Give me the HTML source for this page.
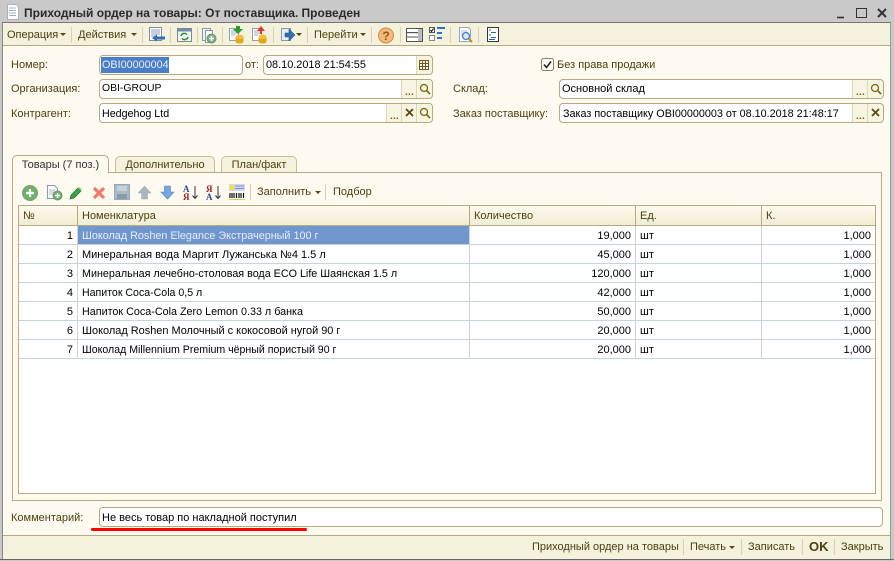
<!DOCTYPE html>
<html><head><meta charset="utf-8">
<style>
html,body{margin:0;padding:0}
body{width:894px;height:561px;overflow:hidden;position:relative;background:#c9c9c9;font:11px/14px "Liberation Sans",sans-serif;color:#000}
.a,.t,.f,svg{position:absolute}
.t{white-space:nowrap;line-height:14px}
.l{color:#4a3f10}
.f{box-sizing:border-box;background:#fff;border:1px solid #b5aa82;border-radius:4px;height:20px}
.btn{position:absolute;top:0;bottom:0;width:15px;background:#f7f4e2;border-left:1px solid #ddd7b8}
.sep{position:absolute;width:1px;background:#d8d2b0}
.c{position:absolute;white-space:nowrap;line-height:14px;color:#000}
.h{position:absolute;top:206px;height:19px;background:linear-gradient(#fdfbef,#f1ecd3);border-right:1px solid #b5aa82;box-sizing:border-box;color:#4a3f10;padding:3px 0 0 4px;line-height:14px;white-space:nowrap}
.tab{position:absolute;box-sizing:border-box;border:1px solid #c8bf97;border-bottom:0;border-radius:5px 5px 0 0;background:#f4f1dc;color:#4a3f10;text-align:center;line-height:17px}
.dots{position:absolute;left:3px;top:10px;font-size:10px;line-height:6px;color:#7a6510;font-weight:bold;letter-spacing:.2px}
</style></head><body>
<!-- window -->
<div class="a" style="left:0;top:0;width:894px;height:561px;background:#c9c9c9"></div>
<svg style="left:6px;top:4px" width="14" height="16"><path d="M1.500.5h9l2 2v13h-11z" fill="#fff" stroke="#a9b3c0"/><path d="M3 4h7M3 6.500h7M3 9h7M3 11.500h7" stroke="#a8b0bb"/></svg>
<div class="t" style="left:24px;top:6px;font-weight:bold;color:#2a2a2a;font-size:12px">Приходный ордер на товары: От поставщика. Проведен</div>
<svg style="left:834px;top:4px" width="56" height="16"><path d="M3 13.500h7" stroke="#333" stroke-width="1.600"/><rect x="22.500" y="4.500" width="10" height="9" fill="none" stroke="#333"/><path d="M44 5l8 8M52 5l-8 8" stroke="#333" stroke-width="2"/></svg>

<div class="a" style="left:2px;top:22px;width:889px;height:537px;background:#fefaef;border-top:1px solid #777;border-left:1px solid #888;box-sizing:border-box;border-right:1px solid #999"></div>
<div class="a" style="left:3px;top:23px;width:887px;height:23px;background:#f4f1dc;border-bottom:1px solid #b5aa82;box-sizing:border-box"></div>
<div class="a" style="left:3px;top:535px;width:887px;height:24px;background:#f4f1dc;border-top:1px solid #b5aa82;box-sizing:border-box"></div>
<div class="a" style="left:0;top:559px;width:894px;height:1px;background:#666"></div>

<!-- toolbar -->
<div class="t l" style="left:7px;top:28px">Операция</div>
<svg style="left:60px;top:33px" width="7" height="4"><path d="M0 0h6L3 3z" fill="#5a4a10"/></svg>
<div class="sep" style="left:71px;top:27px;height:16px"></div>
<div class="t l" style="left:78px;top:28px">Действия</div>
<svg style="left:131px;top:33px" width="7" height="4"><path d="M0 0h6L3 3z" fill="#5a4a10"/></svg>
<div class="sep" style="left:142px;top:27px;height:16px"></div>
<svg style="left:148px;top:26px" width="20" height="18"><path d="M1.500 1.500h12v13h-12z" fill="#fff" stroke="#7c8ea3"/><path d="M3 4h9M3 6h9M3 8h9M3 10h6" stroke="#8fa0b4"/><path d="M4 12l5-3.500v2h8v3H9v2z" fill="#2f6fb5"/></svg>
<div class="sep" style="left:170px;top:27px;height:16px"></div>
<svg style="left:177px;top:28px" width="16" height="15"><rect x=".5" y=".5" width="14" height="13" fill="#f2f5ee" stroke="#7c8a94"/><rect x="1" y="1" width="13" height="2.500" fill="#6f8fb0"/><path d="M4 8a3.500 3.500 0 0 1 6-1.500M11 9a3.500 3.500 0 0 1-6 1.500" stroke="#2e8b3a" stroke-width="1.500" fill="none"/></svg>
<div class="sep" style="left:197px;top:27px;height:16px"></div>
<svg style="left:201px;top:27px" width="16" height="18"><path d="M1.500 1.500h8v12h-8z" fill="#eef1f4" stroke="#8b97a5"/><path d="M4.500 3.500h7v12h-7z" fill="#fff" stroke="#8b97a5"/><circle cx="10.500" cy="11.500" r="4.500" fill="#7cae8c" stroke="#6b8f78"/><path d="M10.500 9v5M8 11.500h5" stroke="#fff" stroke-width="1.500"/></svg>
<div class="sep" style="left:222px;top:27px;height:16px"></div>
<svg style="left:228px;top:26px" width="17" height="18"><path d="M1.500 2.500h9v12h-9z" fill="#fff" stroke="#93a0ad"/><path d="M3 5h6M3 7h6M3 9h4" stroke="#a4aeb9"/><path d="M8 0h4v3h3l-5 5-5-5h3z" fill="#2c9a2c"/><ellipse cx="11.500" cy="10.500" rx="4" ry="1.800" fill="#f0c030"/><path d="M7.500 10.500v5c0 1 1.500 2 4 2s4-1 4-2v-5c0 1-1.500 2-4 2s-4-1-4-2z" fill="#e2a818"/></svg>
<svg style="left:251px;top:26px" width="17" height="18"><path d="M1.500 2.500h9v12h-9z" fill="#fff" stroke="#93a0ad"/><path d="M3 5h6M3 7h6M3 9h4" stroke="#a4aeb9"/><path d="M9 8V5H6l4-5 4 5h-3v3z" fill="#d9382c"/><ellipse cx="11.500" cy="10.500" rx="4" ry="1.800" fill="#f0c030"/><path d="M7.500 10.500v5c0 1 1.500 2 4 2s4-1 4-2v-5c0 1-1.500 2-4 2s-4-1-4-2z" fill="#e2a818"/></svg>
<div class="sep" style="left:273px;top:27px;height:16px"></div>
<svg style="left:280px;top:27px" width="22" height="16"><path d="M1.500 1.500h9v12h-9z" fill="#e8edf2" stroke="#8b97a5"/><path d="M5 6h4V2l6 6-6 6v-4H5z" fill="#2f6fb5" stroke="#21466e" stroke-width=".5"/><path d="M16 6h6l-3 3z" fill="#5a4a10"/></svg>
<div class="sep" style="left:307px;top:27px;height:16px"></div>
<div class="t l" style="left:314px;top:28px">Перейти</div>
<svg style="left:360px;top:33px" width="7" height="4"><path d="M0 0h6L3 3z" fill="#5a4a10"/></svg>
<div class="sep" style="left:371px;top:27px;height:16px"></div>
<svg style="left:377px;top:27px" width="18" height="18"><circle cx="9" cy="8.500" r="7.500" fill="#f5b877" stroke="#c98a48"/><text x="9" y="13" font-size="12" font-weight="bold" font-family="Liberation Sans,sans-serif" text-anchor="middle" fill="#8a5a20">?</text></svg>
<div class="sep" style="left:400px;top:27px;height:16px"></div>
<svg style="left:406px;top:28px" width="17" height="15"><rect x=".5" y=".5" width="16" height="13" fill="#fff" stroke="#555"/><path d="M1 4.500h15M1 9h15" stroke="#555"/><rect x="12" y="1" width="4" height="12" fill="#bbb"/><rect x="1" y="5" width="11" height="1" fill="#ddd"/></svg>
<svg style="left:429px;top:27px" width="17" height="15"><rect x=".5" y=".5" width="5" height="5" fill="#fff" stroke="#555"/><path d="M1.500 3l1 1.500 2-3" stroke="#000" fill="none"/><rect x=".5" y="8.500" width="5" height="5" fill="#fff" stroke="#888"/><path d="M8 1h8M8 6h5M8 11h5" stroke="#2f6fd0" stroke-width="2"/></svg>
<div class="sep" style="left:450px;top:27px;height:16px"></div>
<svg style="left:458px;top:26px" width="16" height="18"><path d="M1.500 1.500h9l2 2v12h-11z" fill="#fff" stroke="#8fa7c8"/><path d="M3 5h6M3 7h3M3 9h3" stroke="#a8c0da"/><circle cx="8" cy="10" r="3.500" fill="#cfe7f7" stroke="#4a80b8" stroke-width="1.300"/><path d="M10.500 12.500l3.500 3.500" stroke="#c08a30" stroke-width="2"/></svg>
<div class="sep" style="left:478px;top:27px;height:16px"></div>
<svg style="left:487px;top:27px" width="13" height="16"><rect x=".5" y=".5" width="11" height="14" fill="#fff" stroke="#333"/><path d="M2 3h2M4 5.500h5M2 8h2M4 10.500h5M2 12.500h6" stroke="#2a6a9a"/></svg>

<!-- form labels -->
<div class="t l" style="left:11px;top:58px">Номер:</div>
<div class="t l" style="left:11px;top:82px">Организация:</div>
<div class="t l" style="left:11px;top:107px">Контрагент:</div>
<div class="t l" style="left:245px;top:58px">от:</div>
<div class="t l" style="left:453px;top:82px">Склад:</div>
<div class="t l" style="left:453px;top:107px">Заказ поставщику:</div>

<!-- fields -->
<div class="f" style="left:99px;top:55px;width:144px"><div class="a" style="left:1px;top:1px;width:68px;height:16px;background:#4a7fc8"></div><div class="t" style="left:2px;top:2px;color:#e8eefc;font-size:10.800px">OBI00000004</div></div>
<div class="f" style="left:263px;top:55px;width:170px"><div class="t" style="left:2px;top:2px;font-size:10.900px">08.10.2018 21:54:55</div><div class="btn" style="right:0;border-radius:0 4px 4px 0"><svg style="left:2px;top:3px" width="11" height="12"><path d="M.5 1.500h9v9h-9zM.5 4.500h9M.5 7.500h9M3.500 1.500v9M6.500 1.500v9" fill="none" stroke="#6a5a20"/></svg></div></div>

<div class="f" style="left:99px;top:79px;width:334px"><div class="t" style="left:2px;top:2px;font-size:10.400px">OBI-GROUP</div>
 <div class="btn" style="right:15px"><span class="dots">...</span></div>
 <div class="btn" style="right:0;border-radius:0 4px 4px 0"><svg style="left:2px;top:3px" width="12" height="12"><circle cx="5" cy="5" r="3.500" fill="none" stroke="#7a6510" stroke-width="1.300"/><path d="M7.500 7.500l3.500 3.500" stroke="#7a6510" stroke-width="1.600"/></svg></div></div>

<div class="f" style="left:99px;top:103px;width:334px"><div class="t" style="left:2px;top:3px;font-size:10.700px">Hedgehog Ltd</div>
 <div class="btn" style="right:30px"><span class="dots">...</span></div>
 <div class="btn" style="right:15px"><svg style="left:3px;top:4px" width="10" height="10"><path d="M1 1l7 7M8 1L1 8" stroke="#5a4a10" stroke-width="1.800"/></svg></div>
 <div class="btn" style="right:0;border-radius:0 4px 4px 0"><svg style="left:2px;top:3px" width="12" height="12"><circle cx="5" cy="5" r="3.500" fill="none" stroke="#7a6510" stroke-width="1.300"/><path d="M7.500 7.500l3.500 3.500" stroke="#7a6510" stroke-width="1.600"/></svg></div></div>

<div class="f" style="left:559px;top:79px;width:325px"><div class="t" style="left:2px;top:2px;font-size:11px">Основной склад</div>
 <div class="btn" style="right:15px"><span class="dots">...</span></div>
 <div class="btn" style="right:0;border-radius:0 4px 4px 0"><svg style="left:2px;top:3px" width="12" height="12"><circle cx="5" cy="5" r="3.500" fill="none" stroke="#7a6510" stroke-width="1.300"/><path d="M7.500 7.500l3.500 3.500" stroke="#7a6510" stroke-width="1.600"/></svg></div></div>

<div class="f" style="left:559px;top:103px;width:325px"><div class="t" style="left:3px;top:3px;font-size:10.800px">Заказ поставщику OBI00000003 от 08.10.2018 21:48:17</div>
 <div class="btn" style="right:15px"><span class="dots">...</span></div>
 <div class="btn" style="right:0;border-radius:0 4px 4px 0"><svg style="left:3px;top:4px" width="10" height="10"><path d="M1 1l7 7M8 1L1 8" stroke="#5a4a10" stroke-width="1.800"/></svg></div></div>

<!-- checkbox -->
<svg style="left:541px;top:58px" width="13" height="13"><rect x=".5" y=".5" width="12" height="12" rx="2" fill="#fdfdf8" stroke="#8a8060"/><path d="M3 6.500l2.500 3L10 3.500" fill="none" stroke="#222" stroke-width="1.600"/></svg>
<div class="t l" style="left:557px;top:58px">Без права продажи</div>

<!-- tabs -->
<div class="a" style="left:12px;top:172px;width:870px;height:329px;border:1px solid #b5aa82;box-sizing:border-box"></div>
<div class="tab" style="left:115px;top:156px;width:100px;height:16px">Дополнительно</div>
<div class="tab" style="left:221px;top:156px;width:76px;height:16px">План/факт</div>
<div class="tab" style="left:12px;top:155px;width:97px;height:18px;background:#fefaef;color:#333;line-height:19px;z-index:2;border-color:#b5aa82">Товары (7 поз.)</div>

<!-- table toolbar -->
<svg style="left:22px;top:185px" width="16" height="16"><circle cx="8" cy="8" r="7.500" fill="#6fb06a" stroke="#7d9a7a"/><path d="M8 4v8M4 8h8" stroke="#fff" stroke-width="2.200"/></svg>
<svg style="left:46px;top:184px" width="17" height="17"><path d="M1.500 1.500h7l3 3v10h-10z" fill="#fff" stroke="#8b9bb0"/><path d="M3 6h6M3 8h6M3 10h4" stroke="#a8b8cb"/><circle cx="11.500" cy="11.500" r="4.500" fill="#6fb06a" stroke="#6b8f78"/><path d="M11.500 9v5M9 11.500h5" stroke="#fff" stroke-width="1.500"/></svg>
<svg style="left:69px;top:186px" width="14" height="14"><path d="M1 13l1-4 7-7 3 3-7 7z" fill="#3fa03f" stroke="#23702a" stroke-width=".7"/><path d="M9 2l3 3 1-1.500-2.500-2.500z" fill="#9bd06a"/></svg>
<svg style="left:92px;top:186px" width="14" height="14"><path d="M2 2l10 10M12 2L2 12" stroke="#ef7a68" stroke-width="3.200"/></svg>
<svg style="left:114px;top:184px" width="16" height="16"><rect x=".5" y=".5" width="15" height="15" fill="#a9bac8" stroke="#98aab8"/><rect x="3" y="2" width="10" height="5" fill="#c6d2dc"/><rect x="3" y="10" width="10" height="5" fill="#8a9cab"/></svg>
<svg style="left:137px;top:185px" width="15" height="15"><path d="M7.500 1L14 8h-3.500v6h-6V8H1z" fill="#a8b6c2" stroke="#9aa8b5" stroke-width=".5"/></svg>
<svg style="left:160px;top:185px" width="15" height="15"><path d="M4.500 1h6v6H14L7.500 14 1 7h3.500z" fill="#74a8e0" stroke="#4f80b8" stroke-width=".6"/></svg>
<svg style="left:183px;top:184px" width="16" height="17"><text x="0" y="8" font-size="9" font-weight="bold" font-family="Liberation Serif,serif" fill="#1f4f96">А</text><text x="0" y="16" font-size="9" font-weight="bold" font-family="Liberation Serif,serif" fill="#a02020">Я</text><path d="M12 2v12M9.500 11.500l2.500 3 2.500-3" fill="none" stroke="#334"/></svg>
<svg style="left:206px;top:184px" width="16" height="17"><text x="0" y="8" font-size="9" font-weight="bold" font-family="Liberation Serif,serif" fill="#a02020">Я</text><text x="0" y="16" font-size="9" font-weight="bold" font-family="Liberation Serif,serif" fill="#1f4f96">А</text><path d="M12 2v12M9.500 11.500l2.500 3 2.500-3" fill="none" stroke="#334"/></svg>
<svg style="left:229px;top:184px" width="16" height="16"><rect x="0" y="0" width="16" height="7" fill="#d0d8f0"/><rect x="1" y="1" width="4" height="5" fill="#f2e040"/><path d="M6 2h9M6 4.500h9" stroke="#8090c8"/><rect x="0" y="8" width="16" height="7" fill="#fff"/><path d="M1 9v5M3 9v5M5 9v5M7.500 9v5M10 9v5M12 9v5M14.500 9v5" stroke="#111" stroke-width="1.200"/><rect y="15" width="16" height="1" fill="#c8d860"/></svg>
<div class="sep" style="left:250px;top:184px;height:16px"></div>
<div class="t l" style="left:257px;top:185px">Заполнить</div>
<svg style="left:315px;top:191px" width="7" height="4"><path d="M0 0h6L3 3z" fill="#5a4a10"/></svg>
<div class="sep" style="left:325px;top:184px;height:16px"></div>
<div class="t l" style="left:333px;top:185px">Подбор</div>

<!-- table -->
<div class="a" style="left:18px;top:205px;width:858px;height:289px;background:#fff;border:1px solid #b5aa82;box-sizing:border-box"></div>
<div class="h" style="left:19px;width:59px;">№</div>
<div class="h" style="left:78px;width:392px">Номенклатура</div>
<div class="h" style="left:470px;width:166px">Количество</div>
<div class="h" style="left:636px;width:126px">Ед.</div>
<div class="h" style="left:762px;width:113px;border-right:0">К.</div>
<div class="a" style="left:19px;top:225px;width:856px;height:1px;background:#b5aa82"></div>

<div class="a" style="left:78px;top:226px;width:391px;height:18px;background:#7097cd"></div>
<!-- grid -->
<div class="a" style="left:19px;top:244px;width:856px;height:1px;background:#c9d3de"></div>
<div class="a" style="left:19px;top:263px;width:856px;height:1px;background:#c9d3de"></div>
<div class="a" style="left:19px;top:282px;width:856px;height:1px;background:#c9d3de"></div>
<div class="a" style="left:19px;top:301px;width:856px;height:1px;background:#c9d3de"></div>
<div class="a" style="left:19px;top:320px;width:856px;height:1px;background:#c9d3de"></div>
<div class="a" style="left:19px;top:339px;width:856px;height:1px;background:#c9d3de"></div>
<div class="a" style="left:19px;top:358px;width:856px;height:1px;background:#c9d3de"></div>
<div class="a" style="left:77px;top:226px;width:1px;height:133px;background:#c9d3de"></div>
<div class="a" style="left:469px;top:226px;width:1px;height:133px;background:#c9d3de"></div>
<div class="a" style="left:635px;top:226px;width:1px;height:133px;background:#c9d3de"></div>
<div class="a" style="left:761px;top:226px;width:1px;height:133px;background:#c9d3de"></div>

<div class="c" style="right:821px;top:229px">1</div><div class="c" style="left:82px;top:229px;color:#e6eefa;font-size:10.800px">Шоколад Roshen Elegance Экстрачерный 100 г</div><div class="c" style="right:263px;top:229px">19,000</div><div class="c" style="left:640px;top:229px">шт</div><div class="c" style="right:23px;top:229px">1,000</div>
<div class="c" style="right:821px;top:248px">2</div><div class="c" style="left:82px;top:248px;font-size:11px">Минеральная вода Маргит Лужанська №4 1.5 л</div><div class="c" style="right:263px;top:248px">45,000</div><div class="c" style="left:640px;top:248px">шт</div><div class="c" style="right:23px;top:248px">1,000</div>
<div class="c" style="right:821px;top:267px">3</div><div class="c" style="left:82px;top:267px;font-size:10.750px">Минеральная лечебно-столовая вода ECO Life Шаянская 1.5 л</div><div class="c" style="right:263px;top:267px">120,000</div><div class="c" style="left:640px;top:267px">шт</div><div class="c" style="right:23px;top:267px">1,000</div>
<div class="c" style="right:821px;top:286px">4</div><div class="c" style="left:82px;top:286px;font-size:10.600px">Напиток Coca-Cola 0,5 л</div><div class="c" style="right:263px;top:286px">42,000</div><div class="c" style="left:640px;top:286px">шт</div><div class="c" style="right:23px;top:286px">1,000</div>
<div class="c" style="right:821px;top:305px">5</div><div class="c" style="left:82px;top:305px;font-size:10.770px">Напиток Coca-Cola Zero Lemon 0.33 л банка</div><div class="c" style="right:263px;top:305px">50,000</div><div class="c" style="left:640px;top:305px">шт</div><div class="c" style="right:23px;top:305px">1,000</div>
<div class="c" style="right:821px;top:324px">6</div><div class="c" style="left:82px;top:324px;font-size:10.950px">Шоколад Roshen Молочный с кокосовой нугой 90 г</div><div class="c" style="right:263px;top:324px">20,000</div><div class="c" style="left:640px;top:324px">шт</div><div class="c" style="right:23px;top:324px">1,000</div>
<div class="c" style="right:821px;top:343px">7</div><div class="c" style="left:82px;top:343px;font-size:10.600px">Шоколад Millennium Premium чёрный пористый 90 г</div><div class="c" style="right:263px;top:343px">20,000</div><div class="c" style="left:640px;top:343px">шт</div><div class="c" style="right:23px;top:343px">1,000</div>

<!-- comment -->
<div class="t l" style="left:11px;top:511px">Комментарий:</div>
<div class="f" style="left:99px;top:507px;width:784px"><div class="t" style="left:2px;top:3px;font-size:11px">Не весь товар по накладной поступил</div></div>
<div class="a" style="left:91px;top:528px;width:216px;height:3px;background:#f00;border-radius:2px"></div>

<!-- footer -->
<div class="t l" style="left:532px;top:540px">Приходный ордер на товары</div>
<div class="sep" style="left:683px;top:539px;height:16px"></div>
<div class="t l" style="left:690px;top:540px">Печать</div>
<svg style="left:729px;top:546px" width="7" height="4"><path d="M0 0h6L3 3z" fill="#5a4a10"/></svg>
<div class="sep" style="left:741px;top:539px;height:16px"></div>
<div class="t l" style="left:748px;top:540px">Записать</div>
<div class="sep" style="left:802px;top:539px;height:16px"></div>
<div class="t l" style="left:809px;top:540px;font-weight:bold;font-size:13px">OK</div>
<div class="sep" style="left:834px;top:539px;height:16px"></div>
<div class="t l" style="left:841px;top:540px">Закрыть</div>
</body></html>
